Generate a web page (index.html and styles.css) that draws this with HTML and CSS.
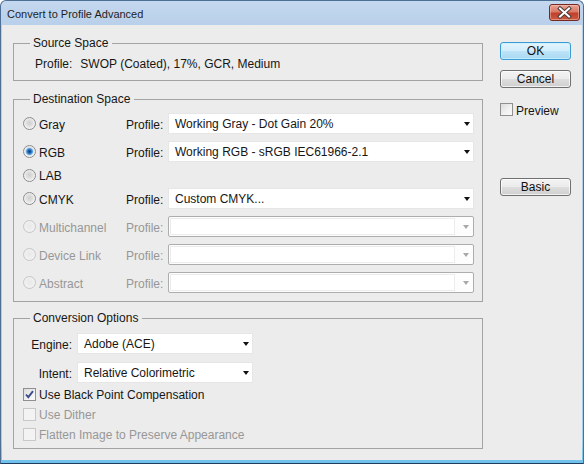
FILE: index.html
```html
<!DOCTYPE html>
<html>
<head>
<meta charset="utf-8">
<link rel="stylesheet" href="styles.css">
</head>
<body>
<div class="window">
  <div class="titlebar">
    <span class="title">Convert to Profile Advanced</span>
    <div class="close">
      <svg width="29" height="15" viewBox="0 0 29 15">
        <path d="M10 3.5 L19 11.5 M19 3.5 L10 11.5" stroke="#4a3a3a" stroke-width="4" stroke-linecap="square" fill="none"/>
        <path d="M10 3.5 L19 11.5 M19 3.5 L10 11.5" stroke="#ffffff" stroke-width="2" stroke-linecap="square" fill="none"/>
      </svg>
    </div>
  </div>
  <div class="client">
    <div class="main">
      <fieldset class="group group-source">
        <legend>Source Space</legend>
        <div class="source-row"><span class="src-label">Profile:</span><span>SWOP (Coated), 17%, GCR, Medium</span></div>
      </fieldset>

      <fieldset class="group group-dest">
        <legend>Destination Space</legend>
        <div class="dest-rows">
          <div class="dest-row">
            <span class="opt"><span class="radio"></span><span class="txt">Gray</span></span>
            <span class="prof-label">Profile:</span>
            <div class="select">Working Gray - Dot Gain 20%<span class="arrow"></span></div>
          </div>
          <div class="dest-row">
            <span class="opt"><span class="radio checked"></span><span class="txt">RGB</span></span>
            <span class="prof-label">Profile:</span>
            <div class="select">Working RGB - sRGB IEC61966-2.1<span class="arrow"></span></div>
          </div>
          <div class="dest-row short">
            <span class="opt"><span class="radio"></span><span class="txt">LAB</span></span>
          </div>
          <div class="dest-row">
            <span class="opt"><span class="radio"></span><span class="txt">CMYK</span></span>
            <span class="prof-label">Profile:</span>
            <div class="select">Custom CMYK...<span class="arrow"></span></div>
          </div>
          <div class="dest-row disabled">
            <span class="opt"><span class="radio"></span><span class="txt">Multichannel</span></span>
            <span class="prof-label">Profile:</span>
            <div class="select"><span class="field"></span><span class="arrow"></span></div>
          </div>
          <div class="dest-row disabled">
            <span class="opt"><span class="radio"></span><span class="txt">Device Link</span></span>
            <span class="prof-label">Profile:</span>
            <div class="select"><span class="field"></span><span class="arrow"></span></div>
          </div>
          <div class="dest-row disabled">
            <span class="opt"><span class="radio"></span><span class="txt">Abstract</span></span>
            <span class="prof-label">Profile:</span>
            <div class="select"><span class="field"></span><span class="arrow"></span></div>
          </div>
        </div>
      </fieldset>

      <fieldset class="group group-conv">
        <legend>Conversion Options</legend>
        <div class="conv-row">
          <span class="conv-label">Engine:</span>
          <div class="select small">Adobe (ACE)<span class="arrow"></span></div>
        </div>
        <div class="conv-row">
          <span class="conv-label">Intent:</span>
          <div class="select small">Relative Colorimetric<span class="arrow"></span></div>
        </div>
        <div class="checks">
          <div class="check-row">
            <span class="checkbox checked">
              <svg width="11" height="11" viewBox="0 0 11 11"><path d="M2 5.5 L4.3 8.2 L9 2.2" stroke="#3b4d8c" stroke-width="1.9" fill="none"/></svg>
            </span><span class="txt">Use Black Point Compensation</span>
          </div>
          <div class="check-row disabled"><span class="checkbox"></span><span class="txt">Use Dither</span></div>
          <div class="check-row disabled"><span class="checkbox"></span><span class="txt">Flatten Image to Preserve Appearance</span></div>
        </div>
      </fieldset>
    </div>

    <div class="side">
      <div class="btn default">OK</div>
      <div class="btn btn-cancel">Cancel</div>
      <div class="check-row preview"><span class="checkbox"></span><span class="txt">Preview</span></div>
      <div class="btn btn-basic">Basic</div>
    </div>
  </div>
</div>
</body>
</html>
```

FILE: styles.css
```css
html, body {
  margin: 0;
  padding: 0;
}
body {
  font-family: "Liberation Sans", Arial, sans-serif;
  font-size: 12px;
  color: #161616;
}
.window {
  width: 584px;
  height: 464px;
  box-sizing: border-box;
  display: flex;
  flex-direction: column;
  border: 1px solid #4d6f94;
  border-bottom-color: #1f3d5e;
  border-radius: 6px 6px 0 0;
  background: linear-gradient(#c4d8ef 0, #b9d0ea 24px, #b3cbe7 300px, #9fd0ee 440px, #6fc0ec 100%);
  overflow: hidden;
}
.titlebar {
  height: 24px;
  flex: none;
  display: flex;
  align-items: center;
  padding-left: 6px;
}
.title {
  font-size: 11px;
  color: #1e1e1e;
  padding-top: 1px;
}
.close {
  margin-left: auto;
  margin-right: 3px;
  align-self: flex-start;
  margin-top: 3px;
  width: 31px;
  height: 17px;
  box-sizing: border-box;
  border: 1px solid #742a20;
  border-radius: 3px;
  background: linear-gradient(#e9a192 0, #d97a66 45%, #c2402a 55%, #cc5a42 100%);
  box-shadow: inset 0 0 0 1px rgba(255, 210, 200, 0.45);
  display: flex;
  align-items: center;
  justify-content: center;
}
.close svg {
  display: block;
}
.client {
  flex: 1;
  margin: 0 1px 3px 1px;
  background: #ececec;
  display: flex;
  padding-left: 11px;
}
.main {
  width: 470px;
  padding-top: 11px;
}
.group {
  margin: 0;
  border: 1px solid #a3a3a3;
  min-inline-size: 0;
}
.group legend {
  padding: 0 4px 0 3px;
  margin-left: 7px;
  line-height: 14px;
  font-size: 12px;
}
.group-source {
  padding: 7px 8px 9px 9px;
}
.source-row {
  line-height: 14px;
  height: 14px;
  padding-left: 12px;
  white-space: nowrap;
}
.src-label {
  margin-right: 8px;
}
.group-dest {
  margin-top: 11px;
  padding: 7px 8px 8px 9px;
}
.dest-rows {
  display: flex;
  flex-direction: column;
  gap: 7px;
}
.dest-row {
  display: grid;
  grid-template-columns: 103px 42px 306px;
  align-items: center;
  height: 21px;
}
.dest-row.short {
  height: 14px;
  margin-top: -2px;
}
.opt {
  display: flex;
  align-items: center;
  white-space: nowrap;
}
.txt {
  padding-top: 2px;
}
.prof-label {
  white-space: nowrap;
  padding-top: 2px;
}
.disabled {
  color: #979797;
}
.radio {
  width: 13px;
  height: 13px;
  box-sizing: border-box;
  border-radius: 50%;
  border: 1px solid #8c8c8c;
  background: radial-gradient(circle at 50% 45%, #cfcfcf 0, #dedede 3px, #f6f6f6 6px);
  margin-right: 3px;
  flex: none;
}
.radio.checked {
  background:
    radial-gradient(circle at 50% 50%, #0e3c78 0, #1f5fa8 1.5px, #5aa0df 3px, #9bcbf1 3.6px, transparent 4.2px),
    radial-gradient(circle at 50% 45%, #cfcfcf 0, #dedede 3px, #f6f6f6 6px);
}
.disabled .radio {
  border-color: #c6c6c6;
  background: radial-gradient(circle at 50% 45%, #e8e8e8 0, #f2f2f2 6px);
}
.select {
  position: relative;
  height: 21px;
  box-sizing: border-box;
  border: 1px solid #e6e6e6;
  background: #ffffff;
  padding: 1px 0 0 6px;
  line-height: 19px;
  white-space: nowrap;
}
.arrow {
  position: absolute;
  right: 3px;
  top: 8px;
  width: 0;
  height: 0;
  border-left: 3.5px solid transparent;
  border-right: 3.5px solid transparent;
  border-top: 4px solid #111111;
}
.disabled .select {
  border: 1px solid #adadad;
  border-radius: 2px;
  background: #fdfdfd;
  padding: 0;
}
.disabled .select .field {
  position: absolute;
  left: 1px;
  top: 1px;
  bottom: 1px;
  right: 18px;
  border: 1px solid #ececec;
  background: #fff;
}
.disabled .select .arrow {
  right: 4px;
  border-top-color: #a8a8a8;
}
.group-conv {
  margin-top: 9px;
  padding: 8px 8px 4px 9px;
}
.conv-row {
  display: grid;
  grid-template-columns: 54px 176px;
  align-items: center;
  height: 21px;
}
.conv-row + .conv-row {
  margin-top: 8px;
}
.conv-label {
  text-align: right;
  padding-right: 5px;
  padding-top: 2px;
}
.checks {
  margin-top: 1px;
}
.check-row {
  display: flex;
  align-items: center;
  height: 20px;
  white-space: nowrap;
}
.checkbox {
  width: 13px;
  height: 13px;
  box-sizing: border-box;
  border: 1px solid #8e8f8f;
  background: linear-gradient(135deg, #dcdcdc 0, #f2f2f2 60%, #fafafa 100%);
  margin-right: 3px;
  flex: none;
  display: flex;
  align-items: center;
  justify-content: center;
}
.checkbox svg {
  display: block;
}
.disabled .checkbox {
  border-color: #c8c8c8;
  background: #f3f3f3;
}
.side {
  margin-left: 17px;
  width: 71px;
  padding-top: 17px;
  display: flex;
  flex-direction: column;
}
.btn {
  height: 18px;
  box-sizing: border-box;
  border: 1px solid #707070;
  border-radius: 3px;
  background: linear-gradient(#f3f3f3 0%, #ebebeb 48%, #dddddd 52%, #cfcfcf 100%);
  box-shadow: inset 0 0 0 1px rgba(255, 255, 255, 0.7);
  text-align: center;
  line-height: 16px;
  font-size: 12px;
  color: #111;
}
.btn.default {
  border-color: #3d9bd3;
  background: linear-gradient(#e4f5fd 0%, #d2edfb 48%, #bde3f8 52%, #a9d8f2 100%);
  box-shadow: inset 0 0 0 1px rgba(200, 240, 255, 0.8);
}
.btn-cancel {
  margin-top: 10px;
}
.preview {
  margin-top: 14px;
  height: 15px;
}
.btn-basic {
  margin-top: 61px;
}
```
